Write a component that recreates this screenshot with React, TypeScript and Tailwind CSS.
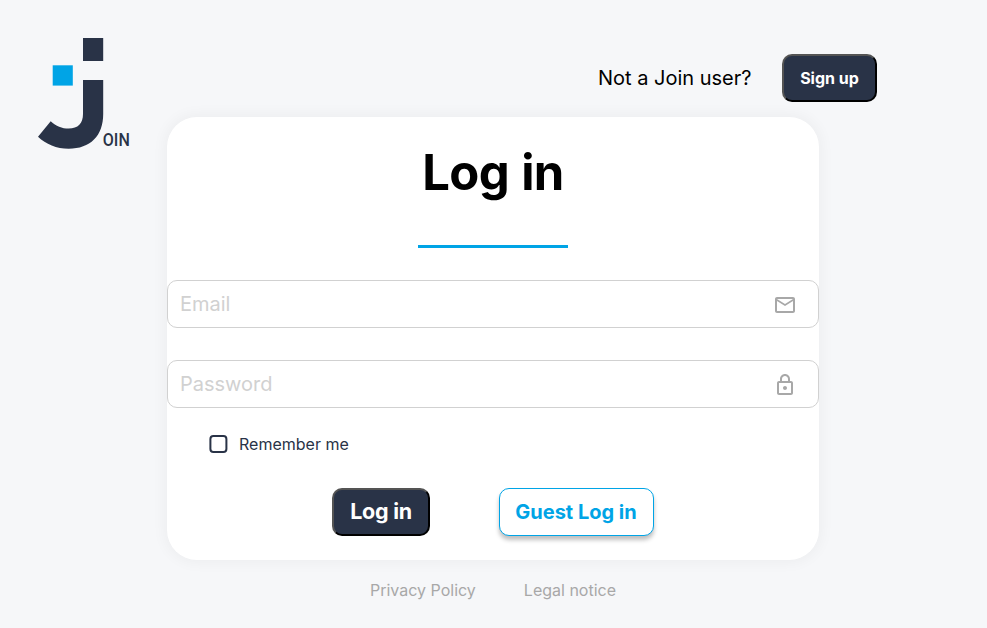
function Logo() {
  return (
    <svg className="ml-[38px] mt-[38px] block" width="100" height="118" viewBox="0 0 100 118" role="img" aria-label="Join">
      <path d="M45 0h20.2v23H45z" fill="#293347" />
      <path d="M14.7 27.3h20.1v20.3H14.7z" fill="#00a4e6" />
      <path
        d="M45 42h20.2v34c0 22-13 34.7-34.5 34.7C18.5 110.7 8 106.200 0 98.700L12.700 83.200C18 88.300 24 90.500 30.700 90.500 40 90.500 45 85.500 45 76z"
        fill="#293347"
      />
      <text
        x="64.800"
        y="107.800"
        textLength="27"
        lengthAdjust="spacingAndGlyphs"
        fontSize="19"
        fontWeight="500"
        fill="#293347"
        className="font-['Roboto',sans-serif]"
      >
        OIN
      </text>
    </svg>
  );
}

function MailIcon() {
  return (
    <svg className="mt-px" width="24" height="24" viewBox="0 0 24 24" fill="#a8a8a8" aria-hidden="true">
      <path d="M22 6c0-1.100-.9-2-2-2H4c-1.100 0-2 .9-2 2v12c0 1.100.9 2 2 2h16c1.100 0 2-.9 2-2V6zm-2 0-8 5-8-5h16zm0 12H4V8l8 5 8-5v10z" />
    </svg>
  );
}

function LockIcon() {
  return (
    <svg className="mt-px" width="24" height="24" viewBox="0 0 24 24" fill="#a8a8a8" aria-hidden="true">
      <path d="M18 8h-1V6c0-2.760-2.240-5-5-5S7 3.240 7 6v2H6c-1.100 0-2 .9-2 2v10c0 1.100.9 2 2 2h12c1.100 0 2-.9 2-2V10c0-1.100-.9-2-2-2zM9 6c0-1.660 1.340-3 3-3s3 1.340 3 3v2H9V6zm9 14H6V10h12v10zm-6-3c1.100 0 2-.9 2-2s-.9-2-2-2-2 .9-2 2 .9 2 2 2z" />
    </svg>
  );
}

export default function App() {
  return (
    <div className="grid h-[628px] grid-cols-[167px_652px_1fr] grid-rows-[117px_443px_68px] overflow-hidden bg-[#f6f7f9] font-['Inter',sans-serif] text-black">
      <div className="row-span-2">
        <Logo />
      </div>

      <header className="col-span-2 flex items-start justify-end pr-[110px] pt-[54px]">
        <span className="mr-[30.500px] text-[20px] leading-[48px]">Not a Join user?</span>
        <button className="h-12 w-[95px] rounded-[10px] border-2 border-black bg-[#293347] text-base font-bold text-white [border-style:outset]">
          Sign up
        </button>
      </header>

      <main className="col-start-2 flex flex-col items-center rounded-[30px] bg-white shadow-[0_0_14px_3px_rgba(0,0,0,0.04)]">
        <h1 className="mt-[27px] text-[49px] leading-[58px] font-bold tracking-[-0.6px] [word-spacing:1px]">Log in</h1>
        <div className="mt-[43px] h-[3px] w-[150px] bg-[#00a4e6]" />

        <label className="mt-8 flex h-12 w-full items-center rounded-[10px] border border-[#d1d1d1] pl-3 pr-[21px]">
          <input type="email" placeholder="Email" className="min-w-0 flex-1 text-[20px] outline-none placeholder:text-[#d1d1d1]" />
          <MailIcon />
        </label>
        <label className="mt-8 flex h-12 w-full items-center rounded-[10px] border border-[#d1d1d1] pl-3 pr-[21px]">
          <input type="password" placeholder="Password" className="min-w-0 flex-1 text-[20px] outline-none placeholder:text-[#d1d1d1]" />
          <LockIcon />
        </label>

        <label className="mt-6 flex h-6 items-center self-start pl-[39px] text-base text-[#293347]">
          <svg className="mr-[8px]" width="25" height="24" viewBox="0 0 25 24" fill="none" aria-hidden="true">
            <rect x="4.400" y="4" width="16" height="16" rx="3" stroke="#293347" strokeWidth="2" />
          </svg>
          Remember me
        </label>

        <div className="mt-8 flex gap-[69px]">
          <button className="h-12 w-[98px] rounded-[10px] border-2 border-black bg-[#293347] pb-0.5 text-[21.500px] font-bold tracking-[-0.25px] text-white [border-style:outset]">
            Log in
          </button>
          <button className="h-12 w-[155px] rounded-[10px] border border-[#00a4e6] bg-white pr-px text-[20px] font-bold text-[#00a4e6] shadow-[0_4px_4px_rgba(0,0,0,0.25)]">
            Guest Log in
          </button>
        </div>
      </main>

      <footer className="col-start-2 flex justify-center gap-12 pt-[18px] text-base text-[#a8a8a8]">
        <a>Privacy Policy</a>
        <a>Legal notice</a>
      </footer>
    </div>
  );
}
